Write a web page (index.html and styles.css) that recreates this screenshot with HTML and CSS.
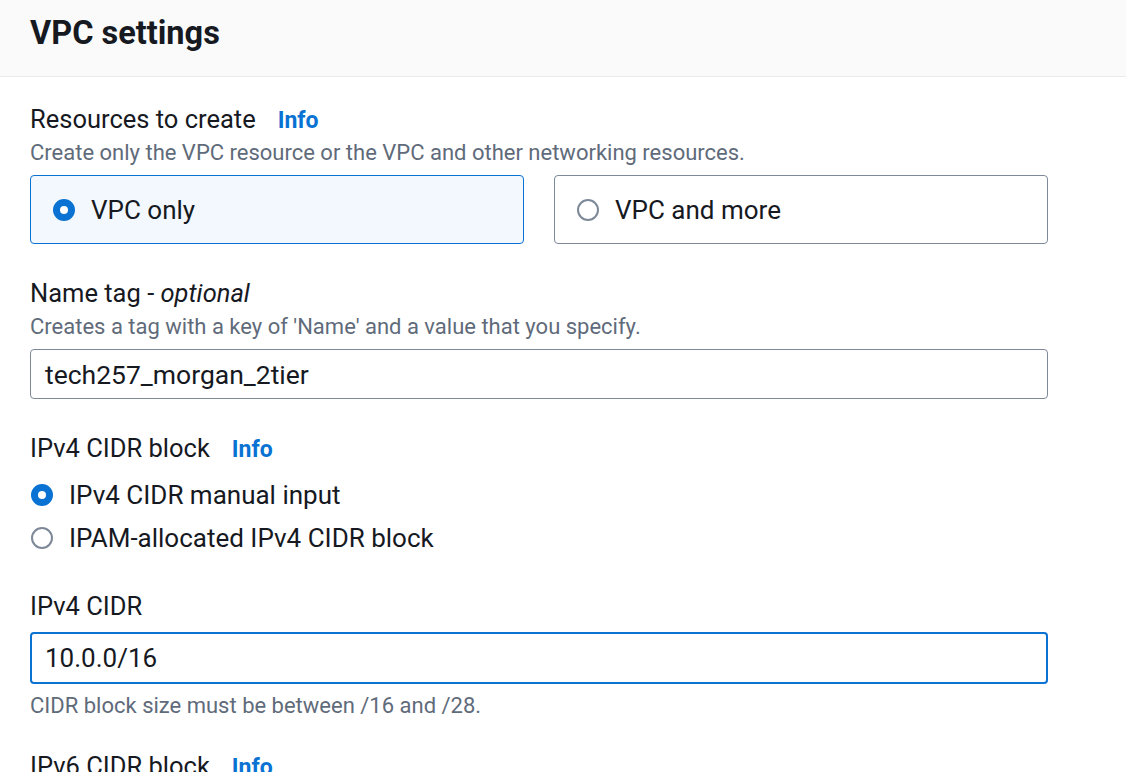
FILE: index.html
```html
<!DOCTYPE html>
<html>
<head>
<meta charset="utf-8">
<link rel="stylesheet" href="styles.css">
</head>
<body>
<div class="panel">
  <div class="panel-header">
    <h2 class="panel-title">VPC settings</h2>
  </div>
  <div class="panel-body">
    <div class="field field-resources">
      <div class="label-row"><span class="label">Resources to create</span><a class="info">Info</a></div>
      <div class="desc">Create only the VPC resource or the VPC and other networking resources.</div>
      <div class="tiles">
        <div class="tile tile-selected"><span class="radio radio-on"></span><span class="tile-text">VPC only</span></div>
        <div class="tile"><span class="radio"></span><span class="tile-text">VPC and more</span></div>
      </div>
    </div>

    <div class="field field-name">
      <div class="label-row"><span class="label">Name tag - <i>optional</i></span></div>
      <div class="desc">Creates a tag with a key of 'Name' and a value that you specify.</div>
      <div class="input">tech257_morgan_2tier</div>
    </div>

    <div class="field field-block">
      <div class="label-row"><span class="label">IPv4 CIDR block</span><a class="info">Info</a></div>
      <div class="radio-list">
        <div class="radio-item"><span class="radio radio-on"></span><span class="radio-text">IPv4 CIDR manual input</span></div>
        <div class="radio-item"><span class="radio"></span><span class="radio-text">IPAM-allocated IPv4 CIDR block</span></div>
      </div>
    </div>

    <div class="field field-cidr">
      <div class="label-row"><span class="label">IPv4 CIDR</span></div>
      <div class="input input-focus">10.0.0/16</div>
      <div class="desc hint">CIDR block size must be between /16 and /28.</div>
    </div>

    <div class="field field-v6">
      <div class="label-row"><span class="label">IPv6 CIDR block</span><a class="info">Info</a></div>
    </div>
  </div>
</div>
</body>
</html>
```

FILE: styles.css
```css
* { box-sizing: border-box; }
html, body { margin: 0; padding: 0; background: #ffffff; }
body {
  font-family: Roboto, "Noto Sans", sans-serif;
  color: #16191f;
  overflow: hidden;
  height: 772px;
}
.panel { width: 1126px; }
.panel-header {
  height: 77px;
  background: #fafafa;
  border-bottom: 1px solid #e9ebed;
  padding: 11px 30px 0;
}
.panel-title {
  margin: 0;
  font-size: 32.5px;
  line-height: 44px;
  font-weight: 700;
  color: #16191f;
}
.panel-body {
  padding: 27px 30px 0;
  width: 1078px;
  display: flex;
  flex-direction: column;
}
.label-row {
  display: flex;
  align-items: baseline;
  gap: 22px;
  height: 30px;
}
.label {
  font-size: 25.5px;
  line-height: 30px;
  color: #16191f;
}
.info {
  font-size: 23px;
  line-height: 30px;
  font-weight: 700;
  color: #0972d3;
}
.desc {
  font-size: 22px;
  line-height: 26px;
  color: #5f6b7a;
  margin-top: 6px;
}
.tiles {
  display: flex;
  gap: 30px;
  margin-top: 9px;
}
.tile {
  flex: 1;
  height: 69px;
  border: 1px solid #7d8998;
  border-radius: 4px;
  display: flex;
  align-items: center;
  padding-left: 22px;
  gap: 16px;
}
.tile-selected {
  background: #f2f8fd;
  border-color: #0972d3;
}
.tile-text { font-size: 26px; line-height: 30px; }
.radio {
  width: 22px;
  height: 22px;
  border-radius: 50%;
  border: 2px solid #7d8998;
  background: #fff;
  flex: none;
}
.radio-on {
  border: 7px solid #0972d3;
}
.field-name { margin-top: 34px; }
.input {
  margin-top: 9px;
  height: 50px;
  border: 1px solid #7d8998;
  border-radius: 4px;
  padding: 0 14px;
  display: flex;
  align-items: center;
  font-size: 26.5px;
  color: #16191f;
}
.input-focus {
  height: 52px;
  border: 2px solid #0972d3;
  padding: 0 13px;
  margin-top: 11px;
  font-size: 26px;
}
.field-block { margin-top: 34px; }
.radio-list { margin-top: 17px; display: flex; flex-direction: column; gap: 13px; }
.radio-item { display: flex; align-items: center; gap: 16px; padding-left: 1px; height: 30px; }
.radio-text { font-size: 26px; line-height: 30px; }
.field-cidr { margin-top: 38px; }
.hint { margin-top: 9px; }
.field-v6 { margin-top: 32px; }
```
